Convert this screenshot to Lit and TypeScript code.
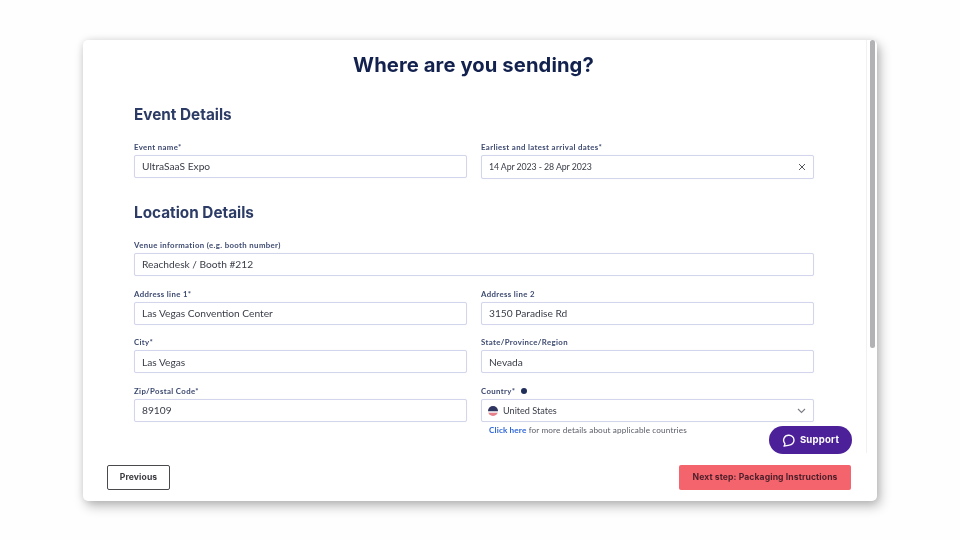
import { LitElement, html, css } from "lit";
import { customElement } from "lit/decorators.js";

@customElement("app-root")
export class AppRoot extends LitElement {
  static styles = css`
    :host { display: block; width: 960px; height: 540px; box-sizing: border-box; padding: 40px 83px 39px; background: #fefefe; overflow: hidden; font-family: "Lato", "Liberation Sans", sans-serif; }
    .card { position: relative; height: 461px; width: 794px; background: #fff; border-radius: 5px; display: flex; flex-direction: column; box-shadow: 3px 5px 12px rgba(0,0,0,.28), 0 0 9px rgba(0,0,0,.1); filter: blur(.3px); }
    .scroll { height: 413px; flex: none; width: 784px; box-sizing: border-box; padding: 10.5px 53px 0 51px; border-right: 1px solid #f1f1f1; }
    h1 { margin: 0 0 25.5px; text-align: center; font: 700 20.2px/28px "Inter", sans-serif; color: #12214d; letter-spacing: .1px; }
    h2 { margin: 0; font: 700 15.3px/22px "Inter", sans-serif; color: #2c3c66; }
    .event { margin: 14px 0 23px; }
    .loc { margin-top: 14px; display: grid; grid-template-columns: 333px 333px; column-gap: 14px; row-gap: 10.7px; }
    .wide { grid-column: 1 / -1; }
    .field { display: flex; flex-direction: column; }
    label { font: 700 7.8px/14px "Lato", sans-serif; letter-spacing: .36px; color: #3d4a70; display: flex; align-items: flex-start; gap: 6px; height: 15px; }
    .input { height: 23px; box-sizing: border-box; border: 1px solid #d3d5ec; border-radius: 2px; padding: 0 7px; display: flex; align-items: center; font: 400 10.2px/1 "Lato", sans-serif; color: #3a3d48; background: #fff; box-shadow: 0 0 1px #e4e6f5; }
    .input span { flex: 1; }
    .input.date span { font-size: 8.8px; letter-spacing: -.1px; }
    .input.country span { font-size: 9.1px; }
    .input.tall { height: 24px; }
    .info { width: 6px; height: 6px; margin-top: 4px; border-radius: 50%; background: #1f2f5a; display: inline-block; }
    .flag { flex: none; width: 10px; height: 10px; margin: 0 5px 0 -1px; }
    .help { font: 400 8.2px/12px "Lato", sans-serif; letter-spacing: .13px; color: #5a5d68; margin: 2px 0 0 8px; }
    .help a { color: #2f66d8; font-weight: 700; text-decoration: none; }
    .footer { flex: 1; display: flex; justify-content: space-between; align-items: flex-start; padding: 12px 26px 0 24px; }
    button { height: 25px; box-sizing: border-box; border-radius: 2px; font: 700 8.6px/1 "Inter", sans-serif; letter-spacing: .1px; cursor: pointer; }
    .prev { width: 63px; background: #fff; border: 1px solid #4a4a4e; color: #3b3b40; }
    .next { width: 172px; background: #f4646c; border: none; color: #4a1f2a; }
    .support { position: absolute; left: 686px; top: 386px; width: 83px; height: 28px; border-radius: 14px; border: none; background: #4c2098; color: #fff; display: flex; align-items: center; justify-content: center; gap: 5px; font: 700 9.6px/1 "Inter", sans-serif; letter-spacing: .2px; }
    .support svg { width: 13px; height: 13px; }
    .thumb { position: absolute; right: 2px; top: 0; width: 5px; height: 308px; background: #b2b2b4; border-radius: 3px; }
  `;

  private field(label: string, value: string, wide = false) {
    return html`<div class="field ${wide ? "wide" : ""}"><label>${label}</label><div class="input"><span>${value}</span></div></div>`;
  }

  render() {
    return html`
      <div class="card">
        <div class="scroll">
          <h1>Where are you sending?</h1>
          <h2>Event Details</h2>
          <div class="loc event">
            ${this.field("Event name*", "UltraSaaS Expo")}
            <div class="field">
              <label>Earliest and latest arrival dates*</label>
              <div class="input date tall"><span>14 Apr 2023 - 28 Apr 2023</span>
                <svg width="8" height="8" viewBox="0 0 8 8" fill="none" stroke="#55585f" stroke-width="1"><path d="M1 1l6 6M7 1L1 7"/></svg>
              </div>
            </div>
          </div>
          <h2>Location Details</h2>
          <div class="loc">
            ${this.field("Venue information (e.g. booth number)", "Reachdesk / Booth #212", true)}
            ${this.field("Address line 1*", "Las Vegas Convention Center")}
            ${this.field("Address line 2", "3150 Paradise Rd")}
            ${this.field("City*", "Las Vegas")}
            ${this.field("State/Province/Region", "Nevada")}
            ${this.field("Zip/Postal Code*", "89109")}
            <div class="field">
              <label>Country* <i class="info"></i></label>
              <div class="input country">
                <svg class="flag" viewBox="0 0 10 10"><defs><clipPath id="c"><circle cx="5" cy="5" r="5"/></clipPath></defs><g clip-path="url(#c)"><rect width="10" height="10" fill="#f2f0f2"/><rect y="6.8" width="10" height="3.2" fill="#e8808c"/><rect width="10" height="5.2" fill="#2e3560"/></g></svg>
                <span>United States</span>
                <svg width="9" height="6" viewBox="0 0 9 6" fill="none" stroke="#7b7d85" stroke-width="1.1"><path d="M1 1l3.5 3.5L8 1"/></svg>
              </div>
              <div class="help"><a>Click here</a> for more details about applicable countries</div>
            </div>
          </div>
        </div>
        <div class="footer">
          <button class="prev">Previous</button>
          <button class="next">Next step: Packaging Instructions</button>
        </div>
        <button class="support">
          <svg viewBox="0 0 14 14" fill="none" stroke="#fff" stroke-width="1.5" stroke-linejoin="round"><path d="M7.4 1.4a5.3 5.3 0 0 1 .4 10.6c-1.5.2-3.2.6-5.6 1 .8-1 1-1.8.9-2.8A5.3 5.3 0 0 1 7.4 1.4z"/></svg>
          Support
        </button>
        <div class="thumb"></div>
      </div>
    `;
  }
}
